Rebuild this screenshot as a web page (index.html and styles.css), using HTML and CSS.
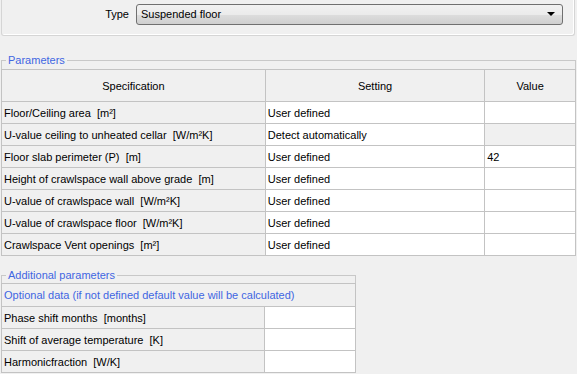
FILE: index.html
```html
<!DOCTYPE html>
<html lang="en">

<head>
    <meta charset="UTF-8">
    <title>Suspended floor</title>
    <link rel="stylesheet" href="styles.css">
</head>

<body>
    <div class="type-box">
        <label class="type-label">Type</label>
        <div class="combo">
            <span class="combo-text">Suspended floor</span>
            <span class="combo-arrow"></span>
        </div>
    </div>

    <fieldset class="group params">
        <legend>Parameters</legend>
        <table class="grid">
            <colgroup>
                <col class="c-spec">
                <col class="c-set">
                <col class="c-val">
            </colgroup>
            <tr class="head">
                <th>Specification</th>
                <th>Setting</th>
                <th>Value</th>
            </tr>
            <tr>
                <td>Floor/Ceiling area&nbsp; [m²]</td>
                <td class="edit">User defined</td>
                <td class="edit"></td>
            </tr>
            <tr>
                <td>U-value ceiling to unheated cellar&nbsp; [W/m²K]</td>
                <td class="edit">Detect automatically</td>
                <td></td>
            </tr>
            <tr>
                <td>Floor slab perimeter (P)&nbsp; [m]</td>
                <td class="edit">User defined</td>
                <td class="edit">42</td>
            </tr>
            <tr>
                <td>Height of crawlspace wall above grade&nbsp; [m]</td>
                <td class="edit">User defined</td>
                <td class="edit"></td>
            </tr>
            <tr>
                <td>U-value of crawlspace wall&nbsp; [W/m²K]</td>
                <td class="edit">User defined</td>
                <td class="edit"></td>
            </tr>
            <tr>
                <td>U-value of crawlspace floor&nbsp; [W/m²K]</td>
                <td class="edit">User defined</td>
                <td class="edit"></td>
            </tr>
            <tr>
                <td>Crawlspace Vent openings&nbsp; [m²]</td>
                <td class="edit">User defined</td>
                <td class="edit"></td>
            </tr>
        </table>
    </fieldset>

    <fieldset class="group extra">
        <legend>Additional parameters</legend>
        <table class="grid">
            <colgroup>
                <col class="c-name">
                <col class="c-input">
            </colgroup>
            <tr>
                <td class="note" colspan="2">Optional data (if not defined default value will be calculated)</td>
            </tr>
            <tr>
                <td>Phase shift months&nbsp; [months]</td>
                <td class="edit"></td>
            </tr>
            <tr>
                <td>Shift of average temperature&nbsp; [K]</td>
                <td class="edit"></td>
            </tr>
            <tr>
                <td>Harmonicfraction&nbsp; [W/K]</td>
                <td class="edit"></td>
            </tr>
        </table>
    </fieldset>
</body>

</html>
```

FILE: styles.css
```css
* {
    margin: 0;
    padding: 0;
    box-sizing: border-box;
}

body {
    width: 577px;
    height: 374px;
    overflow: hidden;
    background-color: #f0f0f0;
    font-family: "Liberation Sans", Arial, sans-serif;
    font-size: 11px;
    color: #000;
}

/* top type selector */
.type-box {
    display: flex;
    justify-content: flex-end;
    align-items: center;
    gap: 7px;
    width: 574px;
    height: 36px;
    margin-left: 1px;
    padding: 0 11px 7px 0;
    border: 1px solid #d5d5d5;
    border-top: none;
    border-radius: 0 0 3px 3px;
    box-shadow: inset -1px -1px 0 #fff;
}

.combo {
    display: flex;
    align-items: center;
    justify-content: space-between;
    width: 427px;
    height: 21px;
    padding: 0 7px 0 4px;
    border: 1px solid #707070;
    border-radius: 3px;
    background: linear-gradient(#f2f2f2 0%, #ebebeb 50%, #dddddd 51%, #cfcfcf 100%);
}

.combo-arrow {
    width: 0;
    height: 0;
    border-left: 4px solid transparent;
    border-right: 4px solid transparent;
    border-top: 4px solid #000;
}

/* group boxes */
.group {
    min-width: 0;
    border: 1px solid #c8c8c8;
    border-bottom: none;
}

.group legend {
    margin-left: 4px;
    padding: 0 2px;
    line-height: 14px;
    color: #3f66e2;
}

.params {
    width: 575px;
    margin: 17px 0 0 1px;
    padding-top: 2px;
}

.extra {
    width: 355px;
    margin: 12px 0 0 1px;
    padding-top: 1px;
}

/* tables */
.grid {
    border-collapse: collapse;
    margin-left: -1px;
    margin-right: -1px;
}

.params .grid {
    width: 575px;
}

.extra .grid {
    width: 355px;
}

.c-spec {
    width: 264px;
}

.c-set {
    width: 220px;
}

.c-val {
    width: 91px;
}

.c-name {
    width: 264px;
}

.c-input {
    width: 91px;
}

.grid th,
.grid td {
    height: 22px;
    padding: 0 2px;
    border: 1px solid #c3c3c3;
    font-weight: normal;
    text-align: left;
    white-space: nowrap;
    background-color: #f0f0f0;
}

.grid .head th {
    height: 32px;
    text-align: center;
}

.grid td.edit {
    background-color: #fff;
}

.grid td.note {
    height: 23px;
    color: #3f66e2;
}
```
